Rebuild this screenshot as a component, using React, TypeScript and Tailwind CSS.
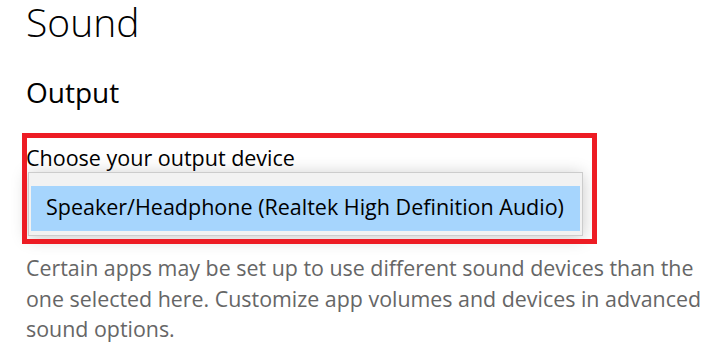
export default function App() {
  return (
    <div className="relative w-[719px] h-[351px] overflow-hidden bg-white font-['Open_Sans','Noto_Sans',sans-serif] text-black">
      <div className="pl-[26px]">
        <h1 className="text-[39px] leading-[44px] font-light">Sound</h1>
        <h2 className="mt-[30px] text-[28px] leading-[36px]">Output</h2>

        <div className="mt-[34px] text-[21.5px] leading-[28px]">Choose your output device</div>

        {/* open combobox list */}
        <div className="ml-[2px] w-[555px] border border-[#cccccc] bg-[#f2f2f2] px-[2px] pt-[13px] pb-[4px] shadow-[0_2px_16px_rgba(0,0,0,0.22)]">
          <div className="h-[45px] bg-[#a6d5fd] pl-[15px] text-[21.5px] leading-[41px]">
            Speaker/Headphone (Realtek High Definition Audio)
          </div>
        </div>

        <p className="mt-[17px] w-[680px] text-[21.4px] leading-[30.5px] text-[#666666]">
          Certain apps may be set up to use different sound devices than the one selected here. Customize app volumes and
          devices in advanced sound options.
        </p>
      </div>

      {/* highlight annotation */}
      <div className="pointer-events-none absolute left-[22px] top-[133px] h-[111px] w-[575px] border-[5px] border-[#ed1c24]" />
    </div>
  );
}
